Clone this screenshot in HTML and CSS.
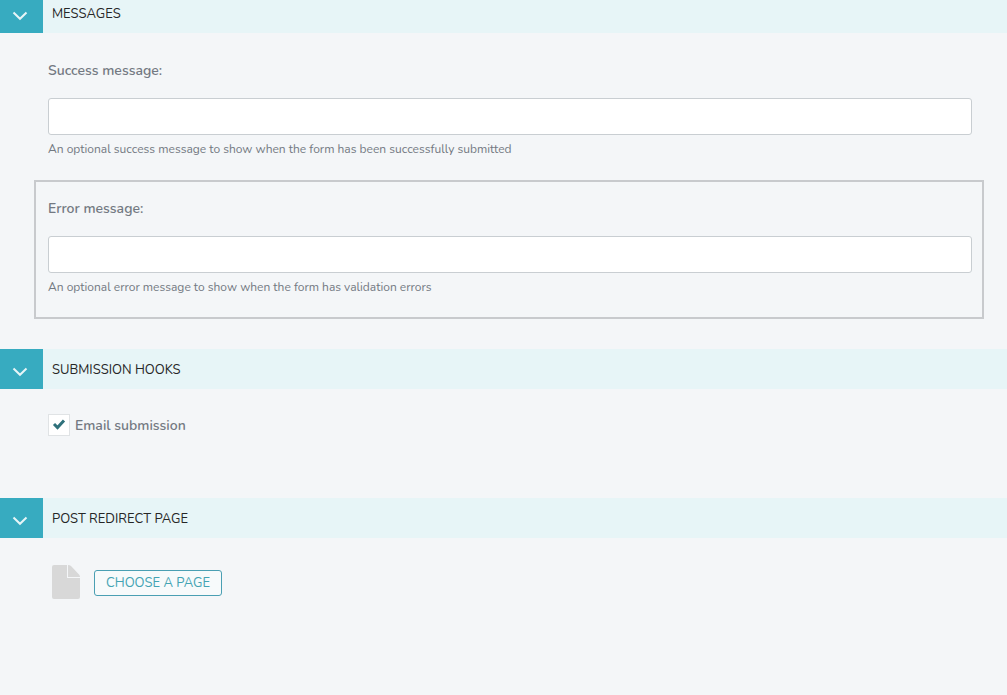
FILE: index.html
```html
<!DOCTYPE html>
<html lang="en">
<head>
<meta charset="utf-8">
<meta name="viewport" content="width=device-width, initial-scale=1">
<title>Form settings</title>
<link rel="stylesheet" href="styles.css">
</head>
<body>
<form class="panels">
  <section class="panel">
    <header class="panel-header">
      <button class="toggle" type="button" aria-label="Toggle messages" aria-expanded="true">
        <svg class="chevron" viewBox="0 0 16 10" aria-hidden="true"><path d="M1.500 1.500 8 7.800l6.500-6.300"/></svg>
      </button>
      <h2 class="panel-title">MESSAGES</h2>
    </header>
    <div class="panel-body fields">
      <div class="field">
        <label class="field-label" for="success">Success message:</label>
        <input class="text-input" id="success" type="text" aria-describedby="success-help">
        <p class="help" id="success-help">An optional success message to show when the form has been successfully submitted</p>
      </div>
      <div class="field field-active">
        <label class="field-label" for="error">Error message:</label>
        <input class="text-input" id="error" type="text" aria-describedby="error-help">
        <p class="help" id="error-help">An optional error message to show when the form has validation errors</p>
      </div>
    </div>
  </section>
  <section class="panel">
    <header class="panel-header">
      <button class="toggle" type="button" aria-label="Toggle submission hooks" aria-expanded="true">
        <svg class="chevron" viewBox="0 0 16 10" aria-hidden="true"><path d="M1.500 1.500 8 7.800l6.500-6.300"/></svg>
      </button>
      <h2 class="panel-title">SUBMISSION HOOKS</h2>
    </header>
    <div class="panel-body hooks">
      <span class="check-box">
        <input class="check-input" id="email" type="checkbox" checked>
        <svg class="check-mark" viewBox="0 0 14 14" aria-hidden="true"><path d="M2 6l3.500 3.500L12 2.500"/></svg>
      </span>
      <label class="check-label" for="email">Email submission</label>
    </div>
  </section>
  <section class="panel">
    <header class="panel-header">
      <button class="toggle" type="button" aria-label="Toggle post redirect page" aria-expanded="true">
        <svg class="chevron" viewBox="0 0 16 10" aria-hidden="true"><path d="M1.500 1.500 8 7.800l6.500-6.300"/></svg>
      </button>
      <h2 class="panel-title">POST REDIRECT PAGE</h2>
    </header>
    <div class="panel-body chooser">
      <svg class="page-icon" viewBox="0 0 28 34" aria-hidden="true"><path d="M2 0H15V13H28V32a2 2 0 0 1-2 2H2a2 2 0 0 1-2-2V2a2 2 0 0 1 2-2ZM16 0Q18 0 19 1L27 9.500Q28 10.500 28 12H16Z"/></svg>
      <button class="choose" type="button">CHOOSE A PAGE</button>
    </div>
  </section>
</form>
</body>
</html>
```
FILE: styles.css
```css
* {
  box-sizing: border-box;
}

body {
  margin: 0;
  background: #f4f6f8;
  color: #737982;
  font-family: Nunito, "Open Sans", sans-serif;
  overflow-x: hidden;
}

/* The first header sits partly above the top edge. */
.panels {
  margin-top: -7px;
}

.panel-header {
  display: flex;
  height: 40px;
  background: #e7f5f7;
}

.toggle {
  width: 43px;
  padding: 5px 4px 0 0;
  border: 0;
  display: flex;
  align-items: center;
  justify-content: center;
  background: #37abc0;
}

.chevron {
  width: 16px;
  height: 10px;
  fill: none;
  stroke: #e7f5f7;
  stroke-width: 2;
}

.panel-title {
  margin: 0 0 0 9px;
  color: #262626;
  font-size: 13px;
  font-weight: 400;
  line-height: 42px;
}

.fields {
  padding: 9px 23px 30px 34px;
}

.field {
  padding: 17px 10px 20px 12px;
  border: 2px solid transparent;
}

.field + .field {
  padding-bottom: 21px;
}

.field-active {
  border-color: #c8cacd;
}

.field-label {
  display: block;
  margin-bottom: 17px;
  font-size: 14px;
  font-weight: 600;
  line-height: 20px;
}

.text-input {
  display: block;
  width: 100%;
  height: 37px;
  padding: 0 10px;
  border: 1px solid #c9ced2;
  border-radius: 3px;
  background: #fff;
  font: inherit;
}

.help {
  margin: 5px 0 0;
  font-size: 12px;
  line-height: 18px;
}

.hooks {
  display: flex;
  align-items: center;
  gap: 5px;
  padding: 25px 48px 62px;
}

.check-box {
  display: grid;
  place-items: center;
  width: 22px;
  height: 22px;
}

.check-input,
.check-mark {
  grid-area: 1 / 1;
}

.check-input {
  appearance: none;
  width: 22px;
  height: 22px;
  margin: 0;
  border: 1px solid #e0e3e5;
  background: #fff;
}

.check-mark {
  width: 14px;
  height: 14px;
  fill: none;
  stroke: #2f717b;
  stroke-width: 3;
  pointer-events: none;
}

.check-input:not(:checked) + .check-mark {
  visibility: hidden;
}

.check-label {
  padding-top: 2px;
  font-size: 14px;
  font-weight: 600;
  line-height: 20px;
}

.chooser {
  display: flex;
  align-items: center;
  gap: 14px;
  padding: 27px 52px;
}

.page-icon {
  width: 28px;
  height: 34px;
  fill: #d8d8d8;
}

.choose {
  height: 26px;
  margin-top: 2px;
  padding: 0 11px;
  border: 1px solid #4a9fb3;
  border-radius: 3px;
  background: #f7fafb;
  color: #43a3b3;
  font-family: inherit;
  font-size: 13px;
  line-height: 22px;
}
```
